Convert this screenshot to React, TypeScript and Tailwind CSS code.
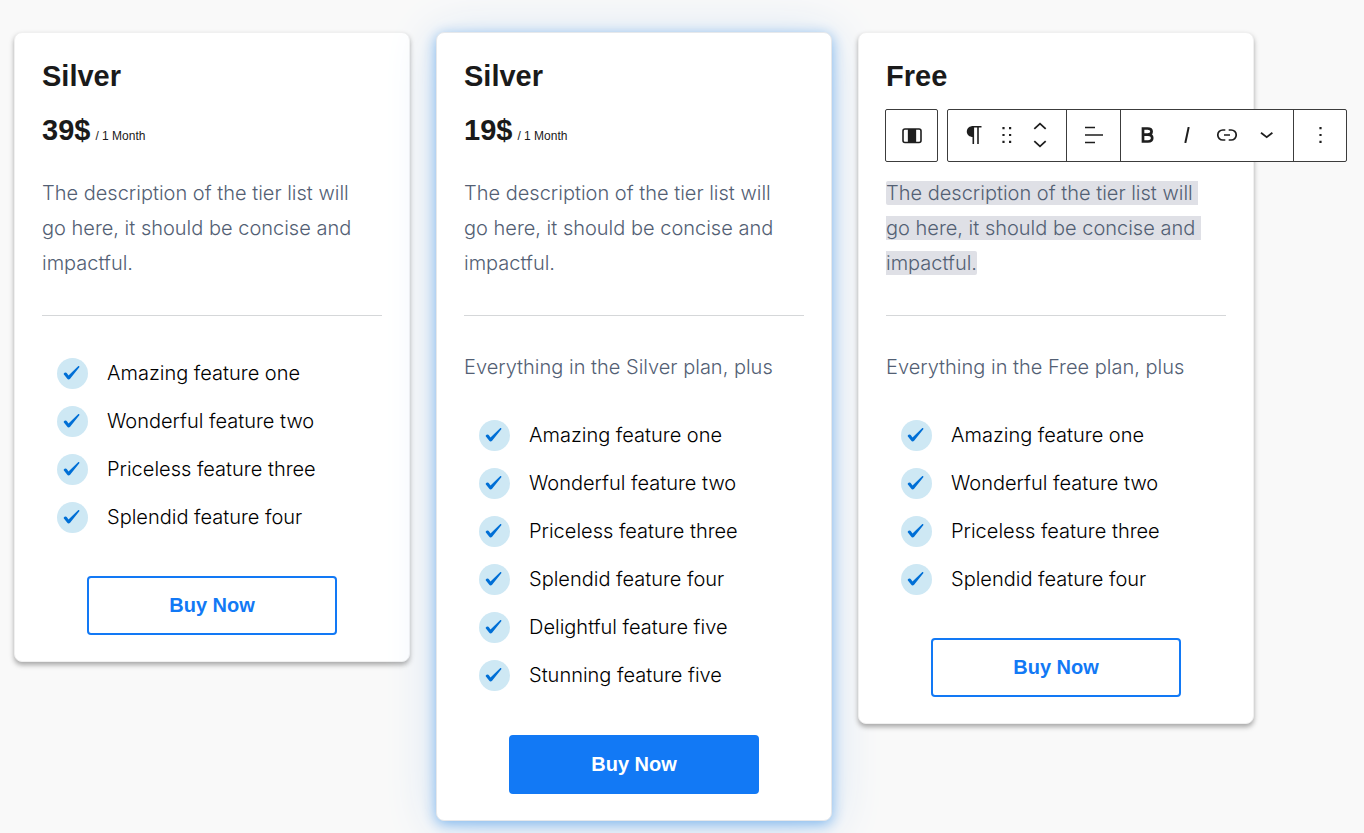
const DESCRIPTION = "The description of the tier list will go here, it should be concise and impactful.";

const tiers = [
  {
    id: "silver-39",
    name: "Silver",
    price: "39$",
    features: ["Amazing feature one", "Wonderful feature two", "Priceless feature three", "Splendid feature four"],
  },
  {
    id: "silver-19",
    name: "Silver",
    price: "19$",
    intro: "Everything in the Silver plan, plus",
    highlighted: true,
    features: [
      "Amazing feature one",
      "Wonderful feature two",
      "Priceless feature three",
      "Splendid feature four",
      "Delightful feature five",
      "Stunning feature five",
    ],
  },
  {
    id: "free",
    name: "Free",
    intro: "Everything in the Free plan, plus",
    editing: true,
    features: ["Amazing feature one", "Wonderful feature two", "Priceless feature three", "Splendid feature four"],
  },
];

function CheckBadge() {
  return (
    <svg className="size-[31px] shrink-0" viewBox="0 0 31 31" aria-hidden="true">
      <circle cx="15.5" cy="15.5" r="15.5" fill="#cee8f4" />
      <path d="M6.800 15.500c.8-1.300 2.500-1.300 3.300-.1l1.400 2.200 9.600-9.300c.7-.6 1.700.2 1.200 1L13.100 20.700c-.9 1.100-2.300 1-3-.1l-3.200-4.200c-.2-.3-.3-.6-.1-.9z" fill="#006fd6" />
    </svg>
  );
}

/* Block toolbar that floats over the selected paragraph */
function BlockToolbar() {
  return (
    <div className="absolute left-[26px] top-[76px] flex gap-[9px] text-[#1e1e1e]" role="toolbar" aria-label="Block tools">
      <div className="flex h-[53px] w-[53px] rounded-xs border border-[#3c3c3c] bg-white">
        <button aria-label="Select parent column" className="flex flex-1 items-center justify-center">
          <svg width="20" height="16" viewBox="0 0 20 16" fill="none">
            <rect x="1" y="1" width="18" height="13.500" rx="2" stroke="currentColor" strokeWidth="1.600" />
            <path d="M6.500 1v13.500M13.500 1v13.500" stroke="currentColor" strokeWidth="1.300" />
            <rect x="6.500" y="1" width="7" height="13.500" fill="currentColor" />
          </svg>
        </button>
      </div>

      <div className="flex h-[53px] rounded-xs border border-[#3c3c3c] bg-white">
        <div className="flex w-[119px] items-center border-r border-[#3c3c3c] pb-px pl-[14px]">
          <button aria-label="Paragraph" className="flex w-[24px] justify-center">
            <svg width="16" height="18" viewBox="0 0 16 18" fill="none">
              <path d="M7.500 0C3.500 0 .8 2.200.8 5.500S3.500 11 7 11z" fill="currentColor" />
              <path d="M6.500.8h9M7.300 0v18M12 0v18" stroke="currentColor" strokeWidth="1.600" />
            </svg>
          </button>
          <button aria-label="Drag" className="ml-[12px] flex w-[18px] justify-center">
            <svg width="10" height="16" viewBox="0 0 10 16" fill="currentColor">
              <path d="M.4 0h2.200v2.200H.4zM7 0h2.200v2.200H7zM.4 6.900h2.200v2.200H.4zM7 6.900h2.200v2.200H7zM.4 13.800h2.200V16H.4zM7 13.800h2.200V16H7z" />
            </svg>
          </button>
          <div className="ml-[14px] flex w-[20px] flex-col items-center gap-[10px]">
            <button aria-label="Move up">
              <svg className="block" width="14" height="8" viewBox="0 0 14 8" fill="none">
                <path d="M1.300 6.800L7 1.600l5.700 5.200" stroke="currentColor" strokeWidth="1.800" />
              </svg>
            </button>
            <button aria-label="Move down">
              <svg className="block" width="14" height="8" viewBox="0 0 14 8" fill="none">
                <path d="M1.300 1.200L7 6.400l5.700-5.200" stroke="currentColor" strokeWidth="1.800" />
              </svg>
            </button>
          </div>
        </div>

        <button aria-label="Align text" className="flex w-[54px] items-center justify-center border-r border-[#3c3c3c] pb-[2px]">
          <svg width="18" height="18" viewBox="0 0 18 18" fill="none">
            <path d="M0 1.500h10M0 9h18M0 16.500h10" stroke="currentColor" strokeWidth="1.700" />
          </svg>
        </button>

        <div className="flex w-[173px] items-center border-r border-[#3c3c3c] pb-px pl-[6px]">
          <button aria-label="Bold" className="flex w-10 justify-center">
            <svg width="13" height="16" viewBox="0 0 13 16" fill="none">
              <path d="M2 1.500h4.600c2.600 0 4 1.100 4 3.100s-1.400 3.100-4 3.100H2zM2 7.700h5c2.700 0 4.200 1.200 4.200 3.400 0 2.200-1.500 3.400-4.200 3.400H2z" stroke="currentColor" strokeWidth="2.700" />
            </svg>
          </button>
          <button aria-label="Italic" className="flex w-10 justify-center">
            <svg width="8" height="16" viewBox="0 0 8 16" fill="none">
              <path d="M5.700 0L2.300 16" stroke="currentColor" strokeWidth="2" />
            </svg>
          </button>
          <button aria-label="Link" className="flex w-10 justify-center">
            <svg width="20" height="12" viewBox="0 0 20 12" fill="none" stroke="currentColor" strokeWidth="1.700">
              <path d="M8.300 1H5.800a5 5 0 0 0 0 10h2.500M11.700 1h2.500a5 5 0 0 1 0 10h-2.500M7 6h6" />
            </svg>
          </button>
          <button aria-label="More formatting" className="flex w-10 justify-center">
            <svg width="14" height="8" viewBox="0 0 14 8" fill="none">
              <path d="M1 1.800l5.700 4.400 5.700-4.400" stroke="currentColor" strokeWidth="1.800" />
            </svg>
          </button>
        </div>

        <button aria-label="Options" className="flex w-[52px] items-center justify-center pb-px">
          <svg width="3" height="16" viewBox="0 0 3 16" fill="currentColor">
            <path d="M.4 0h2.200v2.200H.4zM.4 6.900h2.200v2.200H.4zM.4 13.800h2.200V16H.4z" />
          </svg>
        </button>
      </div>
    </div>
  );
}

function TierCard({ tier }: any) {
  return (
    <article
      className={
        tier.highlighted
          ? "relative rounded-lg border border-[#e6e8eb] bg-white px-[27px] pb-[26px] pt-[23px] shadow-[0_3px_14px_#80b8ee,0_4px_50px_#d0e0f2]"
          : "relative rounded-lg border border-[#f0f0f0] bg-white px-[27px] pb-[26px] pt-[23px] shadow-[0_3px_5px_#a8a8a8]"
      }
    >
      <h2 className="text-[29px] font-bold leading-10 text-[#1a1a1a]">{tier.name}</h2>
      <p className="mt-[14px] h-10 whitespace-nowrap leading-10 text-[#1a1a1a]">
        {tier.price && (
          <>
            <span className="text-[29px] font-bold">{tier.price}</span>
            <span className="ml-[5px] text-[12px]">/ 1 Month</span>
          </>
        )}
      </p>

      <p className="mt-[26px] pr-3 font-[Inter,sans-serif] text-[20px] font-light leading-[35px] text-[#536074]">
        <span className={tier.editing ? "whitespace-break-spaces rounded-xs bg-[#dfe0e6]" : "whitespace-break-spaces"}>{DESCRIPTION}</span>
      </p>
      <hr className="mt-[34px] border-[#d5d7d9]" />

      {tier.intro && <p className="mt-[34px] font-[Inter,sans-serif] text-[20px] font-light leading-[35px] text-[#536074]">{tier.intro}</p>}
      <ul className={tier.intro ? "mt-[35px] space-y-[17px] pl-[15px]" : "mt-[42px] space-y-[17px] pl-[15px]"}>
        {tier.features.map((feature: string) => (
          <li key={feature} className="flex items-center gap-[19px] font-[Inter,sans-serif] text-[20px] font-light leading-[31px] text-black">
            <CheckBadge />
            {feature}
          </li>
        ))}
      </ul>

      <div className={tier.highlighted ? "mt-[44px] px-[45px]" : "mt-[43px] px-[45px]"}>
        <button
          className={
            tier.highlighted
              ? "h-[59px] w-full rounded-sm border-2 border-[#1279f5] bg-[#1279f5] pb-[2px] text-[20px] font-bold text-white"
              : "h-[59px] w-full rounded-sm border-2 border-[#1279f5] bg-white pb-[2px] text-[20px] font-bold text-[#1279f5]"
          }
        >
          Buy Now
        </button>
      </div>

      {tier.editing && <BlockToolbar />}
    </article>
  );
}

export default function App() {
  return (
    <main className="min-h-screen bg-[#f9f9f9] pb-3 pl-[14px] pr-[110px] pt-8 font-['Liberation_Sans',Arial,sans-serif]">
      <div className="grid grid-cols-3 items-start gap-[26px]">
        {tiers.map((tier) => (
          <TierCard key={tier.id} tier={tier} />
        ))}
      </div>
    </main>
  );
}
